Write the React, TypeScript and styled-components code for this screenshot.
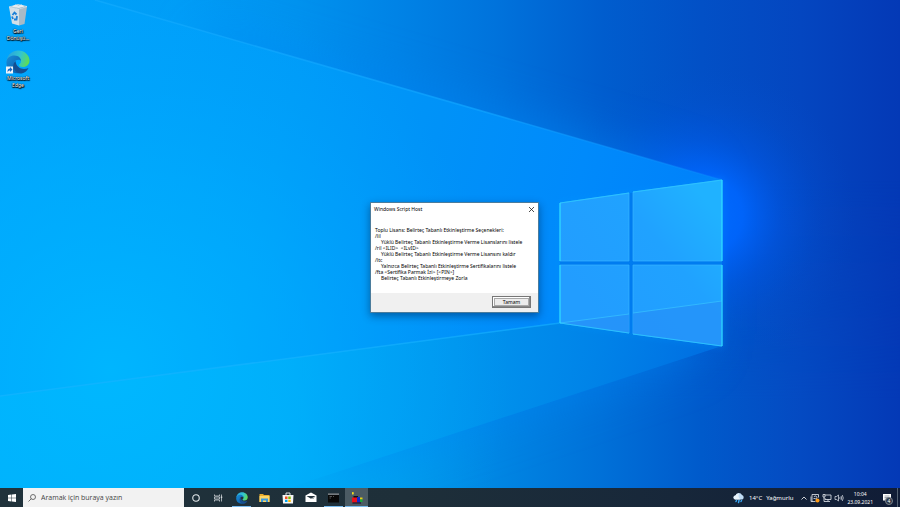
import React from "react";
import styled, { createGlobalStyle } from "styled-components";

const GlobalStyle = createGlobalStyle`
  * { box-sizing: border-box; }
  html, body { margin: 0; padding: 0; overflow: hidden; }
  body, button, input { font-family: "Noto Sans", "Open Sans", sans-serif; }
  button { border: 0; padding: 0; margin: 0; background: none; color: inherit; }
  svg { display: block; flex: none; }
`;

const Screen = styled.div`
  height: 100vh;
  display: flex;
  flex-direction: column;
  position: relative;
  isolation: isolate;
  background: #0090f0;
`;

const WallpaperArt = styled.svg`
  position: absolute;
  inset: 0;
  width: 100%;
  height: 100%;
  z-index: -1;
`;

const Desktop = styled.main`
  flex: 1;
  position: relative;
`;

const IconColumn = styled.nav`
  display: flex;
  flex-direction: column;
  align-items: flex-start;
  gap: 8px;
  padding-top: 3px;
`;

const Shortcut = styled.button`
  width: 36px;
  display: flex;
  flex-direction: column;
  align-items: center;
  gap: 1px;
  color: #fff;
  font-size: 5px;
  line-height: 7px;
  text-align: center;
  text-shadow: 0 0 1px #000, 0 0 1px #000, 0 1px 1px #000, 1px 1px 1px #000;
`;

const Dialog = styled.section`
  position: absolute;
  left: 370px;
  top: 202px;
  width: 169px;
  background: #fff;
  border: 1px solid #4b7c9c;
  box-shadow: 0 3px 8px rgba(0, 20, 60, 0.45);
  color: #000;
`;

const TitleBar = styled.header`
  display: flex;
  align-items: center;
  justify-content: space-between;
  height: 12px;
  padding: 0 4px 0 3px;
`;

const DialogTitle = styled.h1`
  margin: 0;
  font-size: 5px;
  line-height: 8px;
  font-weight: 400;
`;

const CloseButton = styled.button`
  display: flex;
`;

const Message = styled.div`
  padding: 12px 4px;
  font-size: 5px;
  line-height: 6px;
  white-space: nowrap;
`;

const Line = styled.p<{ $indent?: boolean }>`
  margin: 0;
  padding-left: ${(p) => (p.$indent ? 6 : 0)}px;
`;

const DialogFooter = styled.footer`
  display: flex;
  justify-content: flex-end;
  padding: 3px 7px 4px;
  background: #f0f0f0;
`;

const OkButton = styled.button`
  width: 39px;
  height: 12px;
  border: 1px solid #777;
  outline: 1px solid #aaa;
  outline-offset: -3px;
  background: #ececec;
  box-shadow: inset -1px -1px 0 #888, inset 1px 1px 0 #fff;
  color: #000;
  font-size: 5px;
  line-height: 10px;
`;

const Taskbar = styled.footer`
  height: 19px;
  display: flex;
  align-items: stretch;
  background: linear-gradient(90deg, #20323b 0%, #1e2f39 45%, #17273a 75%, #101c36 100%);
  color: #fff;
`;

const TaskButton = styled.button<{ $state?: "open" | "active" }>`
  width: 23px;
  display: flex;
  align-items: center;
  justify-content: center;
  background: ${(p) => (p.$state === "active" ? "#4b5b64" : "transparent")};
  background-image: ${(p) => (p.$state ? "linear-gradient(#76b9ed, #76b9ed)" : "none")};
  background-repeat: no-repeat;
  background-position: bottom center;
  background-size: ${(p) => (p.$state === "active" ? "100% 1px" : "19px 1px")};
`;

const SearchBox = styled.label`
  width: 161px;
  display: flex;
  align-items: center;
  gap: 5px;
  padding-left: 5px;
  background: #f2f2f2;
  color: #444;
`;

const SearchInput = styled.input`
  flex: 1;
  min-width: 0;
  border: 0;
  padding: 0;
  outline: 0;
  background: transparent;
  font-family: "Open Sans", sans-serif;
  font-size: 7px;
  line-height: 12px;
  &::placeholder { color: #444; opacity: 1; }
`;

const Tray = styled.div`
  margin-left: auto;
  display: flex;
  align-items: stretch;
`;

const Weather = styled.button`
  display: flex;
  align-items: center;
  gap: 4px;
  padding-right: 7px;
  font-size: 6px;
  line-height: 10px;
`;

const TrayIcons = styled.div`
  display: flex;
  align-items: center;
  gap: 2px;
`;

const TrayButton = styled.button`
  display: flex;
`;

const Clock = styled.button`
  display: flex;
  flex-direction: column;
  align-items: center;
  justify-content: center;
  padding: 0 3px;
  font-size: 5px;
  line-height: 8px;
`;

const Notifications = styled.button`
  width: 21px;
  display: flex;
  align-items: center;
  justify-content: center;
  position: relative;
`;

const Badge = styled.span`
  position: absolute;
  right: 4px;
  bottom: 2px;
  width: 8px;
  height: 8px;
  border-radius: 50%;
  border: 1px solid #7a828c;
  background: #2b3644;
  font-size: 5px;
  line-height: 6px;
  text-align: center;
`;

const ShowDesktop = styled.button`
  width: 3px;
  border-left: 1px solid #526071;
`;

function Wallpaper() {
  return (
    <WallpaperArt viewBox="0 0 900 507" preserveAspectRatio="xMidYMid slice" aria-hidden="true">
      <defs>
        <linearGradient id="sky" x1="0" x2="900" y1="0" y2="0" gradientUnits="userSpaceOnUse">
          <stop offset="0" stopColor="#00a2fa" />
          <stop offset=".2" stopColor="#009cf6" />
          <stop offset=".33" stopColor="#0092ee" />
          <stop offset=".44" stopColor="#0083e6" />
          <stop offset=".55" stopColor="#0073dc" />
          <stop offset=".67" stopColor="#005dce" />
          <stop offset=".78" stopColor="#0250c6" />
          <stop offset=".89" stopColor="#0446c0" />
          <stop offset="1" stopColor="#0439b6" />
        </linearGradient>
        <linearGradient id="ground" x1="0" x2="900" y1="0" y2="0" gradientUnits="userSpaceOnUse">
          <stop offset="0" stopColor="#00b4fb" />
          <stop offset=".22" stopColor="#00b0f7" />
          <stop offset=".33" stopColor="#00aaf1" />
          <stop offset=".44" stopColor="#009aea" />
          <stop offset=".55" stopColor="#0086e3" />
          <stop offset=".67" stopColor="#0070d8" />
          <stop offset=".78" stopColor="#005acb" />
          <stop offset=".89" stopColor="#044ac2" />
          <stop offset="1" stopColor="#0439b6" />
        </linearGradient>
        <linearGradient id="fade" x1="0" x2="0" y1="180" y2="400" gradientUnits="userSpaceOnUse">
          <stop offset="0" stopColor="#000" />
          <stop offset="1" stopColor="#fff" />
        </linearGradient>
        <mask id="lower">
          <rect width="900" height="507" fill="url(#fade)" />
        </mask>
        <linearGradient id="beam" x1="0" x2="722" y1="40" y2="220" gradientUnits="userSpaceOnUse">
          <stop offset="0" stopColor="#00a4fc" />
          <stop offset=".4" stopColor="#009bf8" />
          <stop offset=".6" stopColor="#0092f8" />
          <stop offset=".8" stopColor="#008afb" />
          <stop offset="1" stopColor="#0080fa" />
        </linearGradient>
        <linearGradient id="floor" x1="0" x2="722" y1="0" y2="0" gradientUnits="userSpaceOnUse">
          <stop offset="0" stopColor="#00b4fb" />
          <stop offset=".4" stopColor="#00acf6" />
          <stop offset=".62" stopColor="#0099ee" />
          <stop offset=".83" stopColor="#0084e8" />
          <stop offset="1" stopColor="#006fe4" />
        </linearGradient>
        <radialGradient id="cyan" cx="110" cy="370" r="400" gradientUnits="userSpaceOnUse">
          <stop offset="0" stopColor="#00b8ff" stopOpacity=".9" />
          <stop offset=".5" stopColor="#00b2ff" stopOpacity=".5" />
          <stop offset="1" stopColor="#00a8ff" stopOpacity="0" />
        </radialGradient>
        <radialGradient id="glow" cx="705" cy="215" r="150" gradientUnits="userSpaceOnUse">
          <stop offset="0" stopColor="#006cff" />
          <stop offset=".25" stopColor="#0066ff" stopOpacity=".9" />
          <stop offset=".5" stopColor="#005cf0" stopOpacity=".45" />
          <stop offset=".75" stopColor="#0056e0" stopOpacity=".15" />
          <stop offset="1" stopColor="#0050d0" stopOpacity="0" />
        </radialGradient>
        <linearGradient id="ray" x1="95" x2="722" y1="0" y2="0" gradientUnits="userSpaceOnUse">
          <stop offset="0" stopColor="#18aeff" stopOpacity=".5" />
          <stop offset=".6" stopColor="#10a4ff" stopOpacity=".7" />
          <stop offset="1" stopColor="#1090ff" stopOpacity=".3" />
        </linearGradient>
        <linearGradient id="pane" x1="600" x2="722" y1="320" y2="220" gradientUnits="userSpaceOnUse">
          <stop offset="0" stopColor="#229dff" />
          <stop offset=".6" stopColor="#20a2ff" />
          <stop offset="1" stopColor="#20b2ff" />
        </linearGradient>
        <filter id="spread" x="-20%" y="-20%" width="140%" height="140%">
          <feGaussianBlur stdDeviation="26" />
        </filter>
        <filter id="halo" x="-10%" y="-10%" width="120%" height="120%">
          <feGaussianBlur stdDeviation="3" />
        </filter>
      </defs>
      <rect width="900" height="507" fill="url(#sky)" />
      <rect width="900" height="507" fill="url(#ground)" mask="url(#lower)" />
      <path d="M200 30 700 174V350L330 474Z" fill="#0084f4" filter="url(#spread)" opacity=".7" />
      <circle cx="705" cy="215" r="150" fill="url(#glow)" />
      <path d="M-30 400 560 323 722 346 230 507 180 530H-30Z" fill="url(#floor)" opacity=".85" />
      <path d="M-30-36 722 180V346L560 323-30 400Z" fill="url(#beam)" />
      <rect width="900" height="507" fill="url(#cyan)" />
      <path d="M95 0 722 180" stroke="url(#ray)" strokeWidth="1.500" fill="none" />
      <path d="M0 396 560 323" stroke="#18b4ff" strokeOpacity=".6" strokeWidth="1.500" />
      <path d="M560 203 722 180V346L560 323Z" fill="none" stroke="#0098ff" strokeWidth="3" filter="url(#halo)" opacity=".4" />
      <path d="M560 203 722 180V346L560 323Z" fill="#007cf0" />
      <g fill="url(#pane)" stroke="#38b4ff" strokeWidth=".7">
        <path d="M560 203 629 193V261H560Z" />
        <path d="M633 192 722 180V261H633Z" />
        <path d="M560 265H629V333L560 323Z" />
        <path d="M633 265H722V346L633 334Z" />
      </g>
      <path d="M560 323 629 314V333ZM633 313 722 301V346L633 334Z" fill="#2790f8" opacity=".7" />
      <path d="M560 323 629 314M633 313 722 301" stroke="#38c4ff" opacity=".7" />
      <path d="M560 203 629 193M560 323 629 333M633 192 722 180M722 346 633 334" fill="none" stroke="#2cc8ff" strokeOpacity=".8" />
      <path d="M560 261V203M560 265V323M722 180V261M722 265V346" fill="none" stroke="#2ce4ff" />
    </WallpaperArt>
  );
}

function EdgeIcon({ size, id, linked }: { size: number; id: string; linked?: boolean }) {
  return (
    <svg width={size} height={size} viewBox="0 0 24 24" aria-hidden="true">
      <defs>
        <linearGradient id={id + "a"} x1="2" x2="24" y1="5" y2="13" gradientUnits="userSpaceOnUse">
          <stop stopColor="#2aa5dd" />
          <stop offset=".5" stopColor="#32c6cf" />
          <stop offset="1" stopColor="#67e03f" />
        </linearGradient>
        <linearGradient id={id + "b"} x1="1" x2="15" y1="10" y2="23" gradientUnits="userSpaceOnUse">
          <stop stopColor="#1686d2" />
          <stop offset="1" stopColor="#0c59a4" />
        </linearGradient>
      </defs>
      <path d="M.5 11C1.500 4 7 .5 12 .5c7 0 11.500 5 11.500 10 0 4-3 6.500-6.500 6.500-3 0-4-1-4-2s2-1 2-4c0-2-2-4-6-4-4 0-7.500 2-8.500 4Z" fill={`url(#${id}a)`} />
      <path d="M.5 11.500C1 8 4 5.500 8.500 5.500c4.500 0 6.500 3 6.500 5.500-1-2-6-2-7 2-1 5 3 9 8.500 9C8 26-.5 20 .5 11.500Z" fill={`url(#${id}b)`} />
      <path d="M9.500 11c-5 4-1 13 6 12.500 3.500-.5 6-3 7-5.500-5 2-12 1-13-7Z" fill="#154f91" />
      {linked && (
        <>
          <path d="M0 16.500H7V23.500H0Z" fill="#eef4fa" />
          <path d="M1.500 22.500c0-3 .5-4 2.500-4V17l2.500 2.500L4 22v-1.500c-1 0-2 .5-2.500 2Z" fill="#1769c4" />
        </>
      )}
    </svg>
  );
}

function RecycleBinIcon() {
  return (
    <svg width="24" height="24" viewBox="0 0 24 24" aria-hidden="true">
      <path d="M3 4 13 6V22.500L6 20.500Z" fill="#d3dfe7" />
      <path d="M13 6 21 3.500 18.500 21 13 22.500Z" fill="#a7bac6" />
      <path d="M3 4 12 1.500 21 3.500 13 6Z" fill="#8fa9b8" stroke="#dfe9ee" strokeWidth=".7" />
      <path d="m5.500 4 4-2.500 3 1 3-1 3 2-5.500 1.500Z" fill="#e4ecf0" />
      <path d="m6.500 12 2-2.500 2 2M11 13l-.5 3.500H8M7 16l-1-2.500" fill="none" stroke="#1c7fd6" strokeWidth="1.800" />
    </svg>
  );
}

function WindowsIcon() {
  return (
    <svg width="8" height="8" viewBox="0 0 16 16" fill="#fff" aria-hidden="true">
      <path d="M0 2 7 1V7.500H0ZM8 1 16 0V7.500H8ZM0 8.500H7V15L0 14ZM8 8.500H16V16L8 15Z" />
    </svg>
  );
}

function SearchIcon() {
  return (
    <svg width="8" height="8" viewBox="0 0 16 16" fill="none" stroke="#444" strokeWidth="1.500" aria-hidden="true">
      <circle cx="10" cy="6" r="5" />
      <path d="M6.500 9.500 1 15" />
    </svg>
  );
}

function CortanaIcon() {
  return (
    <svg width="8" height="8" viewBox="0 0 16 16" fill="none" stroke="#e6eaec" strokeWidth="2.200" aria-hidden="true">
      <circle cx="8" cy="8" r="6.500" />
    </svg>
  );
}

function TaskViewIcon() {
  return (
    <svg width="9" height="8" viewBox="0 0 18 16" fill="none" stroke="#d5dadd" strokeWidth="1.500" aria-hidden="true">
      <path d="M1 1V4H11V1M1 15V12H11V15M1 6H11V10H1ZM15 1V15" />
      <path d="M13.500 5H16.500V8H13.500Z" fill="#d5dadd" stroke="none" />
    </svg>
  );
}

function FolderIcon() {
  return (
    <svg width="11" height="10" viewBox="0 0 22 20" aria-hidden="true">
      <path d="M1 2H8L10 4H21V18H1Z" fill="#e9ad2b" />
      <path d="M1 6H21V18H1Z" fill="#ffd766" />
      <path d="M4 11H18V18H14V15H8V18H4Z" fill="#3d9bdc" />
    </svg>
  );
}

function StoreIcon() {
  return (
    <svg width="12" height="12" viewBox="0 0 24 24" aria-hidden="true">
      <path d="M8 7V2H16V7" fill="none" stroke="#e8ecee" strokeWidth="1.800" />
      <path d="M1 6H23L22 23H2Z" fill="#f5f5f5" />
      <path d="M6 9H11V14H6Z" fill="#f25022" />
      <path d="M12.500 9H17.500V14H12.500Z" fill="#7fba00" />
      <path d="M6 15.500H11V20H6Z" fill="#00a4ef" />
      <path d="M12.500 15.500H17.500V20H12.500Z" fill="#ffb900" />
    </svg>
  );
}

function MailIcon() {
  return (
    <svg width="12" height="11" viewBox="0 0 24 22" aria-hidden="true">
      <path d="M1 7 12 1 23 7V20H1Z" fill="#fff" />
      <path d="M3 8H21L12 13.500Z" fill="#26343d" />
      <path d="m15 14 3-3" stroke="#26343d" strokeWidth="1.500" />
    </svg>
  );
}

function ConsoleIcon() {
  return (
    <svg width="11" height="10" viewBox="0 0 22 20" aria-hidden="true">
      <path d="M0 1H22V19H0Z" fill="#080808" />
      <path d="M0 1H22V3.500H0Z" fill="#9aa2a8" />
      <path d="M3 7H8M10 7H12M3 10H6" stroke="#888" strokeWidth="1.200" />
    </svg>
  );
}

function ScriptHostIcon() {
  return (
    <svg width="12" height="12" viewBox="0 0 24 24" aria-hidden="true">
      <path d="M2 0 6 1 5 5 2 5Z" fill="#f3dc19" />
      <path d="M5 8H14V12H5Z" fill="#111" />
      <path d="M2 11H14V21H2Z" fill="#e8101b" />
      <path d="M12 10H18V21H12Z" fill="#1526c8" />
      <path d="M18 11H23V15H18Z" fill="#e8cf16" />
      <path d="M18 15H23V20H18Z" fill="#16a83c" />
      <path d="M3 21H20V23H3Z" fill="#150b20" />
    </svg>
  );
}

function RainIcon() {
  return (
    <svg width="12" height="12" viewBox="0 0 24 24" aria-hidden="true">
      <path d="M5 15a4 4 0 0 1 0-8 7 7 0 0 1 13-1 5 5 0 0 1 1 9Z" fill="#bfdcf5" />
      <path d="M5 15a4 4 0 0 1 0-8 7 7 0 0 1 7-4c-2 4-1 9 3 12Z" fill="#e9f4fd" />
      <path d="m7 17-1 2M12 17l-1 4M17 17l-1 2" stroke="#38a5f4" strokeWidth="3" strokeLinecap="round" />
    </svg>
  );
}

function ChevronIcon() {
  return (
    <svg width="8" height="8" viewBox="0 0 16 16" fill="none" stroke="#fff" strokeWidth="1.600" aria-hidden="true">
      <path d="m3 11 5-5 5 5" />
    </svg>
  );
}

function UpdateIcon() {
  return (
    <svg width="10" height="10" viewBox="0 0 20 20" fill="none" stroke="#e6eaf0" strokeWidth="1.600" aria-hidden="true">
      <path d="M4 3H17V9M4 3V17H11M2 7V17H5" />
      <path d="M8 8a3 3 0 1 1 3 4M7 11h4" />
      <circle cx="15" cy="15" r="4" fill="#ff9b16" stroke="none" />
    </svg>
  );
}

function NetworkIcon() {
  return (
    <svg width="10" height="10" viewBox="0 0 20 20" fill="none" stroke="#e6eaf0" strokeWidth="1.600" aria-hidden="true">
      <path d="M6 4H18V13H6V10M12 13V16M8 17H16M2 3H6V8H2ZM4 8V17H8" />
    </svg>
  );
}

function SpeakerIcon() {
  return (
    <svg width="10" height="10" viewBox="0 0 20 20" fill="none" stroke="#e6eaf0" strokeWidth="1.400" aria-hidden="true">
      <path d="M2 7H5L9 4V16L5 13H2ZM11.500 8q1.500 2 0 4M14 6q3 4 0 8M16.500 4q4 6 0 12" />
    </svg>
  );
}

function NotificationIcon() {
  return (
    <svg width="10" height="10" viewBox="0 0 20 20" aria-hidden="true">
      <path d="M2 2H18V15H13L10 18V15H2Z" fill="#fff" />
      <path d="M5 6H15M5 9H15M5 12H11" stroke="#455060" />
    </svg>
  );
}

const messageLines = [
  { text: "Toplu Lisans: Belirteç Tabanlı Etkinleştirme Seçenekleri:" },
  { text: "/lil" },
  { text: "Yüklü Belirteç Tabanlı Etkinleştirme Verme Lisanslarını listele", indent: true },
  { text: "/ril <ILID>\u00a0 <ILvID>" },
  { text: "Yüklü Belirteç Tabanlı Etkinleştirme Verme Lisansını kaldır", indent: true },
  { text: "/ltc" },
  { text: "Yalnızca Belirteç Tabanlı Etkinleştirme Sertifikalarını listele", indent: true },
  { text: "/fta <Sertifika Parmak İzi> [<PIN>]" },
  { text: "Belirteç Tabanlı Etkinleştirmeye Zorla", indent: true },
];

export default function App() {
  return (
    <Screen>
      <GlobalStyle />
      <Wallpaper />
      <Desktop>
        <IconColumn>
          <Shortcut>
            <RecycleBinIcon />
            <span>Geri<br />Dönüşü...</span>
          </Shortcut>
          <Shortcut>
            <EdgeIcon size={24} id="desktop-edge" linked />
            <span>Microsoft<br />Edge</span>
          </Shortcut>
        </IconColumn>
        <Dialog role="dialog" aria-labelledby="dialog-title">
          <TitleBar>
            <DialogTitle id="dialog-title">Windows Script Host</DialogTitle>
            <CloseButton aria-label="Kapat">
              <svg width="5" height="5" viewBox="0 0 10 10" stroke="#111" strokeWidth="1.500" aria-hidden="true">
                <path d="m0 0 10 10M10 0 0 10" />
              </svg>
            </CloseButton>
          </TitleBar>
          <Message>
            {messageLines.map((line) => (
              <Line key={line.text} $indent={line.indent}>{line.text}</Line>
            ))}
          </Message>
          <DialogFooter>
            <OkButton>Tamam</OkButton>
          </DialogFooter>
        </Dialog>
      </Desktop>
      <Taskbar>
        <TaskButton aria-label="Başlat"><WindowsIcon /></TaskButton>
        <SearchBox>
          <SearchIcon />
          <SearchInput type="text" aria-label="Arama" placeholder="Aramak için buraya yazın" />
        </SearchBox>
        <TaskButton aria-label="Cortana"><CortanaIcon /></TaskButton>
        <TaskButton aria-label="Görev görünümü"><TaskViewIcon /></TaskButton>
        <TaskButton aria-label="Microsoft Edge" $state="open"><EdgeIcon size={12} id="bar-edge" /></TaskButton>
        <TaskButton aria-label="Dosya Gezgini"><FolderIcon /></TaskButton>
        <TaskButton aria-label="Microsoft Store"><StoreIcon /></TaskButton>
        <TaskButton aria-label="Posta"><MailIcon /></TaskButton>
        <TaskButton aria-label="Komut İstemi" $state="open"><ConsoleIcon /></TaskButton>
        <TaskButton aria-label="Windows Script Host" $state="active"><ScriptHostIcon /></TaskButton>
        <Tray>
          <Weather>
            <RainIcon />
            <span>14°C</span>
            <span>Yağmurlu</span>
          </Weather>
          <TrayIcons>
            <TrayButton aria-label="Gizli simgeler"><ChevronIcon /></TrayButton>
            <TrayButton aria-label="Güncelleştirme"><UpdateIcon /></TrayButton>
            <TrayButton aria-label="Ağ"><NetworkIcon /></TrayButton>
            <TrayButton aria-label="Ses"><SpeakerIcon /></TrayButton>
          </TrayIcons>
          <Clock>
            <span>10:04</span>
            <span>23.09.2021</span>
          </Clock>
          <Notifications aria-label="Bildirimler">
            <NotificationIcon />
            <Badge>4</Badge>
          </Notifications>
          <ShowDesktop aria-label="Masaüstünü göster" />
        </Tray>
      </Taskbar>
    </Screen>
  );
}
